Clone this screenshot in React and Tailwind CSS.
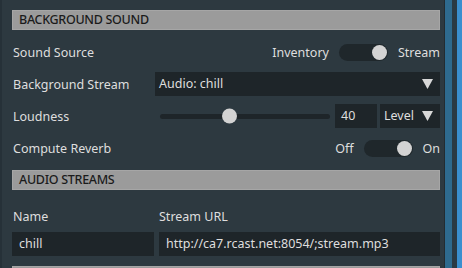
import React from 'react'

const font = { fontFamily: '"Noto Sans", "Open Sans", sans-serif' }

function Arrow() {
  return (
    <svg width="11" height="10" viewBox="0 0 11 10" className="shrink-0">
      <polygon points="0,0 11,0 5.5,10" fill="#d8d8d8" />
    </svg>
  )
}

function Header({ children }) {
  return (
    <div className="flex h-[20px] shrink-0 items-center border border-[#a6a6a6] bg-[#9b9b9b] pl-[6px] pt-[1px] text-[12.5px] font-medium tracking-[-0.3px] text-[#1b1b1b]">
      {children}
    </div>
  )
}

function Toggle({ left, right }) {
  return (
    <div className="flex items-center">
      <span className="pt-[2px] text-[12.5px] text-[#dedede]">{left}</span>
      <div className="ml-[10px] flex h-[17px] w-[49px] items-center justify-end rounded-full bg-[#1f272b] pr-[1px]">
        <div className="h-[15px] w-[15px] rounded-full bg-[#d3d3d3]" />
      </div>
      <span className="ml-[10px] pt-[2px] text-[12.5px] text-[#dedede]">{right}</span>
    </div>
  )
}

export default function App() {
  return (
    <div className="flex h-[268px] w-[462px] overflow-hidden bg-[#2d3940]" style={font}>
      <div className="w-[2px] bg-[#263138]" />
      <div className="flex min-w-0 flex-1 flex-col pl-[10px] pr-[4px] pt-[10px]">
        <Header>BACKGROUND SOUND</Header>

        <div className="mt-[10px] flex h-[24px] shrink-0 items-center justify-between pl-[1px]">
          <span className="pt-[2px] text-[12.5px] text-[#dedede]">Sound Source</span>
          <Toggle left="Inventory" right="Stream" />
        </div>

        <div className="mt-2 flex h-[24px] shrink-0 items-center">
          <span className="w-[143px] pl-[1px] pt-[2px] text-[12.5px] text-[#dedede]">Background Stream</span>
          <div className="flex h-[24px] flex-1 items-center justify-between bg-[#1e2529] pl-[4px] pr-[7px] text-[12.5px] text-[#dedede]">
            <span className="pt-[1px]">Audio: chill</span>
            <Arrow />
          </div>
        </div>

        <div className="mt-2 flex h-[24px] shrink-0 items-center">
          <span className="w-[143px] pl-[1px] pt-[2px] text-[12.5px] text-[#dedede]">Loudness</span>
          <div className="flex flex-1 items-center pl-[5px] pr-[5px]">
            <div className="relative h-[5px] flex-1 rounded-full bg-[#1e2529]">
              <div className="absolute top-1/2 left-[62px] h-[15px] w-[15px] -translate-y-1/2 rounded-full bg-[#d3d3d3]" />
            </div>
          </div>
          <div className="flex h-[24px] w-[42px] items-center bg-[#1e2529] pl-[6px] pt-[1px] text-[12.5px] text-[#dedede]">40</div>
          <div className="ml-[3px] flex h-[24px] w-[60px] items-center justify-between bg-[#1e2529] pl-[4px] pr-[7px] text-[12.5px] text-[#dedede]">
            <span className="pt-[1px]">Level</span>
            <Arrow />
          </div>
        </div>

        <div className="mt-2 flex h-[24px] shrink-0 items-center justify-between pl-[1px]">
          <span className="pt-[2px] text-[12.5px] text-[#dedede]">Compute Reverb</span>
          <Toggle left="Off" right="On" />
        </div>

        <div className="mt-[10px] shrink-0">
          <Header>AUDIO STREAMS</Header>
        </div>

        <div className="mt-[14px] flex h-[24px] shrink-0 items-center text-[12.5px] text-[#dedede]">
          <span className="w-[147px] pl-[1px] pt-[2px]">Name</span>
          <span className="pt-[2px]">Stream URL</span>
        </div>

        <div className="mt-1 flex h-[24px] shrink-0 gap-[5px] text-[12.5px] text-[#dedede]">
          <div className="flex w-[142px] items-center bg-[#1e2529] pl-[7px] pt-[1px]">chill</div>
          <div className="flex flex-1 items-center bg-[#1e2529] pl-[7px] pt-[1px]">http://ca7.rcast.net:8054/;stream.mp3</div>
        </div>

        <div className="mt-[10px] shrink-0">
          <Header>&nbsp;</Header>
        </div>
      </div>
      <div className="w-[1px] bg-[#222c32]" />
      <div className="w-[7px] bg-[#2e6a8e]" />
      <div className="w-[5px] bg-[#2a3a44]" />
      <div className="w-[5px] bg-[#3a8fcf]" />
    </div>
  )
}
